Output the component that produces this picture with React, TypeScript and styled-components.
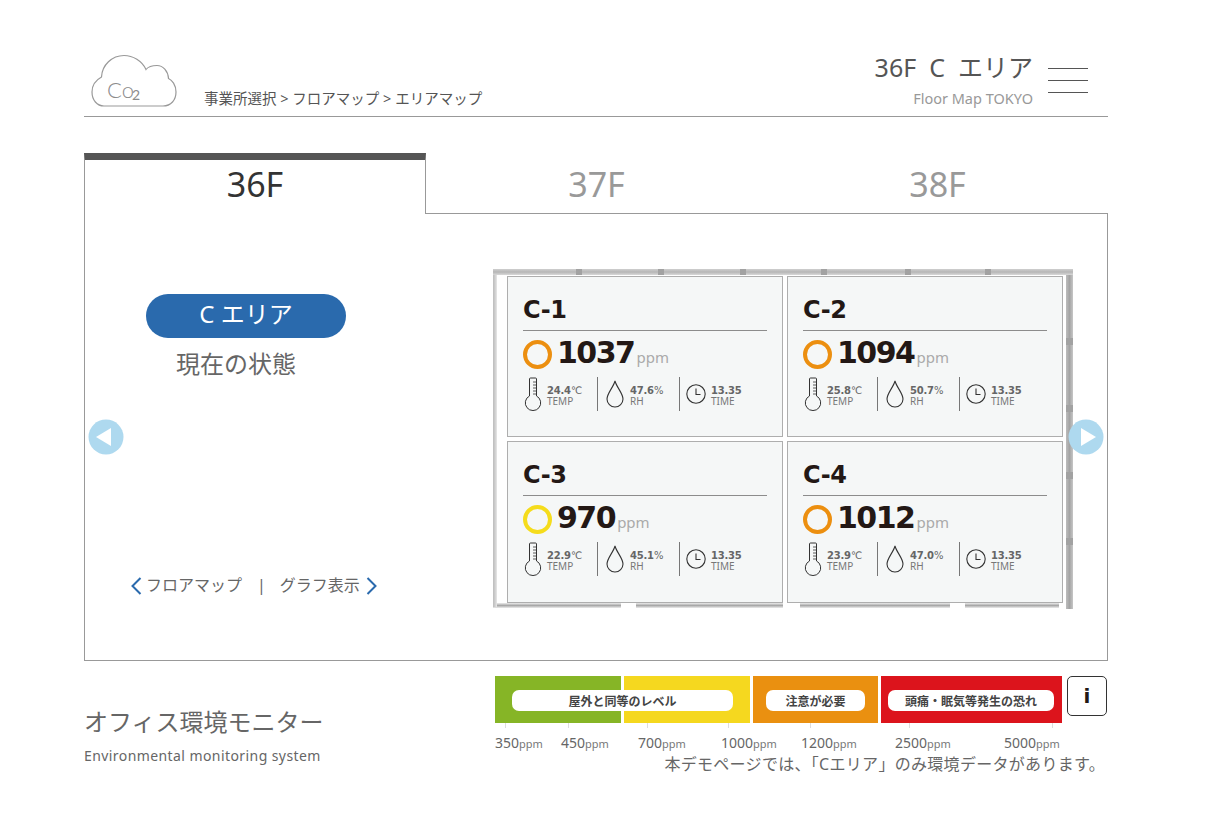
import React from 'react';
import styled, { createGlobalStyle } from 'styled-components';

const GlobalStyle = createGlobalStyle`
  html, body {
    margin: 0;
    padding: 0;
    background: #fff;
    font-family: "Noto Sans", "Noto Sans CJK JP", sans-serif;
    color: #666;
  }
`;

const Page = styled.div`
  width: 1024px;
  margin-left: 84px;
  padding-top: 50px;
`;

const Header = styled.header`
  display: flex;
  justify-content: space-between;
  height: 66px;
  border-bottom: 1px solid #999;
`;

const Brand = styled.div`
  display: flex;
  align-items: flex-start;
`;

const Logo = styled.svg`
  width: 88px;
  height: 54px;
  margin: 4px 0 0 6px;
`;

const Breadcrumb = styled.div`
  margin: 38px 0 0 26px;
  font-size: 14.5px;
  line-height: 20px;
  color: #555;
`;

const HeaderRight = styled.div`
  display: flex;
  gap: 15px;
  margin-right: 20px;
`;

const PlaceBlock = styled.div`
  text-align: right;
`;

const PlaceTitle = styled.div`
  font-size: 25px;
  line-height: 34px;
  color: #555;
  white-space: pre;
`;

const PlaceSub = styled.div`
  margin-top: 5px;
  font-size: 14.5px;
  line-height: 18px;
  color: #999;
`;

const Burger = styled.div`
  display: flex;
  flex-direction: column;
  gap: 11px;
  width: 40px;
  padding-top: 18px;

  span {
    height: 1px;
    background: #555;
  }
`;

const Tabs = styled.div`
  display: flex;
  margin-top: 36px;
  height: 61px;
`;

const Tab = styled.div<{ $active?: boolean }>`
  flex: ${p => (p.$active ? '0 0 342px' : '1')};
  display: flex;
  align-items: center;
  justify-content: center;
  box-sizing: border-box;
  padding-bottom: 6px;
  font-size: 34px;
  color: ${p => (p.$active ? '#333' : '#999')};
  border-top: ${p => (p.$active ? '7px solid #555' : '7px solid transparent')};
  border-left: ${p => (p.$active ? '1px solid #999' : 'none')};
  border-right: ${p => (p.$active ? '1px solid #999' : 'none')};
  border-bottom: ${p => (p.$active ? 'none' : '1px solid #999')};
`;

const Panel = styled.section`
  position: relative;
  display: flex;
  box-sizing: border-box;
  height: 447px;
  border: 1px solid #999;
  border-top: none;
`;

const LeftColumn = styled.div`
  display: flex;
  flex-direction: column;
  width: 408px;
  padding-top: 80px;
`;

const AreaPill = styled.div`
  display: flex;
  align-items: center;
  justify-content: center;
  box-sizing: border-box;
  width: 200px;
  height: 44px;
  margin-left: 61px;
  padding-bottom: 8px;
  border-radius: 22px;
  background: #2a6aad;
  color: #fff;
  font-size: 24px;
`;

const Status = styled.div`
  margin: 10px 0 0 91px;
  font-size: 24px;
  line-height: 32px;
  color: #666;
`;

const LinkRow = styled.div`
  display: flex;
  align-items: center;
  margin: 193px 0 0 45px;
  font-size: 16px;
  line-height: 24px;
  color: #666;
`;

const Separator = styled.span`
  margin: 0 14px 0 15px;
`;

const Chevron = styled.svg<{ $flip?: boolean }>`
  width: 12px;
  height: 20px;
  margin: ${p => (p.$flip ? '2px 0 0 6px' : '2px 4px 0 0')};
  transform: ${p => (p.$flip ? 'scaleX(-1)' : 'none')};
`;

const ArrowButton = styled.svg<{ $side: 'left' | 'right' }>`
  position: absolute;
  top: 205px;
  ${p => (p.$side === 'left' ? 'left: 3px;' : 'right: 3px;')}
  width: 36px;
  height: 36px;
`;

const FloorMap = styled.div`
  position: relative;
  box-sizing: border-box;
  display: grid;
  grid-template-columns: 276px 276px;
  grid-template-rows: 161px 162px;
  gap: 4px;
  width: 580px;
  height: 340px;
  margin-top: 55px;
  padding: 7px 0 0 14px;
  background:
    linear-gradient(to bottom, #cfcfcf, #b6b6b6, #d8d8d8) 0 0 / 100% 6px no-repeat,
    linear-gradient(to right, #bdbdbd, #cdcdcd, #e8e8e8) 0 0 / 4px 338px no-repeat,
    linear-gradient(to right, #bcbcbc, #a4a4a4, #c6c6c6) 573px 0 / 7px 340px no-repeat,
    linear-gradient(to bottom, #ececec, #a8a8a8, #ececec) 0 334px / 128px 5px no-repeat,
    linear-gradient(to bottom, #ececec, #a8a8a8, #ececec) 143px 334px / 147px 5px no-repeat,
    linear-gradient(to bottom, #ececec, #a8a8a8, #ececec) 307px 334px / 150px 5px no-repeat,
    linear-gradient(to bottom, #ececec, #a8a8a8, #ececec) 472px 334px / 94px 5px no-repeat,
    #fff;
`;

const Tick = styled.i<{ $left: number; $top: number; $upright?: boolean }>`
  position: absolute;
  left: ${p => p.$left}px;
  top: ${p => p.$top}px;
  width: ${p => (p.$upright ? '7px' : '6px')};
  height: ${p => (p.$upright ? '7px' : '6px')};
  background: #a2a2a2;
  filter: blur(0.6px);
`;

const Card = styled.article`
  position: relative;
  box-sizing: border-box;
  padding: 0 15px;
  background: #f5f7f7;
  border: 1px solid #aeaeae;
`;

const CardTitle = styled.h3`
  margin: 0;
  height: 54px;
  box-sizing: border-box;
  padding-top: 15px;
  font-family: "DejaVu Sans", sans-serif;
  font-size: 24px;
  line-height: 36px;
  font-weight: 700;
  letter-spacing: -0.5px;
  color: #231815;
  border-bottom: 1px solid #8c8c8c;
`;

const Reading = styled.div`
  display: flex;
  align-items: center;
  height: 46px;
`;

const Ring = styled.span<{ $color: string }>`
  box-sizing: border-box;
  width: 29px;
  height: 29px;
  border-radius: 50%;
  border: 4px solid ${p => p.$color};
`;

const Value = styled.span`
  margin: -2px 0 0 5px;
  font-family: "DejaVu Sans", sans-serif;
  font-size: 30px;
  line-height: 40px;
  font-weight: 700;
  letter-spacing: -1.5px;
  color: #231815;
`;

const Unit = styled.span`
  margin: 6px 0 0 2px;
  font-size: 15px;
  color: #aaa;
`;

const Stats = styled.div`
  display: flex;
  align-items: center;
  height: 34px;
`;

const Stat = styled.div<{ $w: number; $rule?: boolean }>`
  display: flex;
  align-items: center;
  box-sizing: border-box;
  width: ${p => p.$w}px;
  height: 34px;
  border-right: ${p => (p.$rule ? '1px solid #777' : 'none')};
`;

const StatIcon = styled.svg<{ $w: number; $h: number; $ml: number; $mr: number }>`
  flex: none;
  width: ${p => p.$w}px;
  height: ${p => p.$h}px;
  margin-left: ${p => p.$ml}px;
  margin-right: ${p => p.$mr}px;
`;

const StatText = styled.div`
  padding-top: 4px;
  font-size: 10px;
  line-height: 10px;
  color: #777;
  white-space: nowrap;

  b {
    display: block;
    font-family: "DejaVu Sans", sans-serif;
    font-weight: 700;
    font-size: 10px;
    letter-spacing: -0.2px;
    color: #666;
  }

  b small {
    font-size: 10px;
    font-weight: 400;
  }
`;

const Footer = styled.footer`
  display: flex;
  margin-top: 15px;
`;

const SystemName = styled.div`
  width: 411px;
  padding-top: 29px;
`;

const SystemTitle = styled.div`
  font-size: 24px;
  line-height: 34px;
  color: #666;
`;

const SystemSub = styled.div`
  margin-top: 7px;
  font-size: 14px;
  line-height: 20px;
  color: #666;
  letter-spacing: 0.42px;
`;

const LegendColumn = styled.div`
  width: 613px;
`;

const LegendRow = styled.div`
  display: flex;
  align-items: flex-start;
`;

const LegendBar = styled.div`
  display: flex;
  gap: 3px;
  width: 567px;
  height: 47px;
`;

const LegendBand = styled.div<{ $w: number; $bg: string }>`
  position: relative;
  flex: none;
  width: ${p => p.$w}px;
  height: 47px;
  background: ${p => p.$bg};
`;

const LegendLabel = styled.div<{ $left: number; $w: number }>`
  position: absolute;
  z-index: 1;
  top: 14px;
  left: ${p => p.$left}px;
  display: flex;
  align-items: center;
  justify-content: center;
  width: ${p => p.$w}px;
  height: 21px;
  border-radius: 7px;
  background: #fff;
  color: #444;
  font-size: 12px;
  font-weight: 700;
  white-space: nowrap;
`;

const InfoButton = styled.div`
  display: flex;
  align-items: center;
  justify-content: center;
  box-sizing: border-box;
  width: 40px;
  height: 40px;
  margin-left: 5px;
  border: 1px solid #333;
  border-radius: 5px;
  color: #231815;
  font-family: "DejaVu Sans", sans-serif;
  font-size: 20px;
  font-weight: 700;
`;

const Scale = styled.div`
  display: flex;
  height: 30px;
`;

const ScaleItem = styled.div<{ $w: number; $tick: number }>`
  position: relative;
  flex: none;
  width: ${p => p.$w}px;
  padding-top: 10px;
  font-size: 14px;
  line-height: 20px;
  color: #666;
  white-space: nowrap;

  small {
    font-size: 11px;
    color: #777;
  }

  &::before {
    content: '';
    position: absolute;
    top: 0;
    left: ${p => p.$tick}px;
    width: 1px;
    height: 5px;
    background: #ddd;
  }
`;

const Note = styled.div`
  margin-right: 3px;
  text-align: right;
  font-size: 16px;
  line-height: 22px;
  letter-spacing: 0.3px;
  color: #666;
  white-space: nowrap;
`;

const cards = [
  { name: 'C-1', ppm: '1037', color: '#ec8f10', temp: '24.4', rh: '47.6' },
  { name: 'C-2', ppm: '1094', color: '#ec8f10', temp: '25.8', rh: '50.7' },
  { name: 'C-3', ppm: '970', color: '#f5dc1c', temp: '22.9', rh: '45.1' },
  { name: 'C-4', ppm: '1012', color: '#ec8f10', temp: '23.9', rh: '47.0' },
];

const scale = [
  { v: '350', w: 66, tick: 10 },
  { v: '450', w: 77, tick: 7 },
  { v: '700', w: 83, tick: 9 },
  { v: '1000', w: 80, tick: 7 },
  { v: '1200', w: 94, tick: 9 },
  { v: '2500', w: 109, tick: 14 },
  { v: '5000', w: 60, tick: 48 },
];

const topTicks = [83, 165, 247, 328, 412, 492];
const sideTicks = [69, 136, 203, 269];

const Thermometer = () => (
  <StatIcon $w={18} $h={34} $ml={1} $mr={5} viewBox="0 0 18 34" fill="none" stroke="#333" strokeWidth="1">
    <path d="M5.5 19V2a1 1 0 0 1 1-1h5a1 1 0 0 1 1 1v17a7.7 7.7 0 1 1-7 0Z" />
    <path d="M9 5h3.5M9 8h3.5M9 11h3.5M9 14h3.5M9 17h3.5" strokeWidth="0.8" />
  </StatIcon>
);

const Drop = () => (
  <StatIcon $w={18} $h={28} $ml={8} $mr={6} viewBox="0 0 18 28" fill="none" stroke="#333" strokeWidth="1.1">
    <path d="M9 1C7.5 7 1 13.5 1 19a8 8 0 0 0 16 0C17 13.5 10.5 7 9 1Z" />
  </StatIcon>
);

const Clock = () => (
  <StatIcon $w={20} $h={20} $ml={6} $mr={5} viewBox="0 0 20 20" fill="none" stroke="#333" strokeWidth="1.1">
    <circle cx="10" cy="10" r="9.2" />
    <path d="M10 4.6V10.5H14.5" />
  </StatIcon>
);

const App: React.FC = () => {
  return (
    <>
      <GlobalStyle />
      <Page>
        <Header>
          <Brand>
            <Logo viewBox="90 54 88 54" fill="none">
              <path
                d="M104 106H163C171 106 176 100 176 92C176 85 172 80 168.5 78.5C168 71 163 65.5 157 65.5C152 65.5 148 67 146 69.5C142 61 133 55.5 124 55.5C112 55.5 102 65 101.5 77C96 80 92 85 92 92C92 100 97 106 104 106Z"
                stroke="#999"
                strokeWidth="1.2"
              />
              <text x="107" y="98" fontSize="22" fill="#8c8c8c" fontFamily="Lato, sans-serif" fontWeight="300">Co</text>
              <text x="132" y="100" fontSize="14" fill="#8c8c8c" fontFamily="Lato, sans-serif">2</text>
            </Logo>
            <Breadcrumb>事業所選択 &gt; フロアマップ &gt; エリアマップ</Breadcrumb>
          </Brand>
          <HeaderRight>
            <PlaceBlock>
              <PlaceTitle>36F  C  エリア</PlaceTitle>
              <PlaceSub>Floor Map TOKYO</PlaceSub>
            </PlaceBlock>
            <Burger>
              <span />
              <span />
              <span />
            </Burger>
          </HeaderRight>
        </Header>

        <Tabs>
          <Tab $active>36F</Tab>
          <Tab>37F</Tab>
          <Tab>38F</Tab>
        </Tabs>

        <Panel>
          <LeftColumn>
            <AreaPill>C エリア</AreaPill>
            <Status>現在の状態</Status>
            <LinkRow>
              <Chevron viewBox="0 0 12 20" fill="none" stroke="#2a6aad" strokeWidth="2">
                <path d="M10.5 2L2.5 10L10.5 18" />
              </Chevron>
              フロアマップ
              <Separator>|</Separator>
              グラフ表示
              <Chevron $flip viewBox="0 0 12 20" fill="none" stroke="#2a6aad" strokeWidth="2">
                <path d="M10.5 2L2.5 10L10.5 18" />
              </Chevron>
            </LinkRow>
          </LeftColumn>

          <FloorMap>
            {topTicks.map(x => (
              <Tick key={x} $left={x} $top={0} />
            ))}
            {sideTicks.map(y => (
              <Tick key={y} $left={573} $top={y} $upright />
            ))}
            {cards.map(c => (
              <Card key={c.name}>
                <CardTitle>{c.name}</CardTitle>
                <Reading>
                  <Ring $color={c.color} />
                  <Value>{c.ppm}</Value>
                  <Unit>ppm</Unit>
                </Reading>
                <Stats>
                  <Stat $w={75} $rule>
                    <Thermometer />
                    <StatText>
                      <b>{c.temp}<small>℃</small></b>
                      TEMP
                    </StatText>
                  </Stat>
                  <Stat $w={82} $rule>
                    <Drop />
                    <StatText>
                      <b>{c.rh}<small>%</small></b>
                      RH
                    </StatText>
                  </Stat>
                  <Stat $w={80}>
                    <Clock />
                    <StatText>
                      <b>13.35</b>
                      TIME
                    </StatText>
                  </Stat>
                </Stats>
              </Card>
            ))}
          </FloorMap>

          <ArrowButton $side="left" viewBox="0 0 36 36">
            <circle cx="18" cy="18" r="17.5" fill="#aed9ef" />
            <path d="M8 18L23 9V27Z" fill="#fff" />
          </ArrowButton>
          <ArrowButton $side="right" viewBox="0 0 36 36">
            <circle cx="18" cy="18" r="17.5" fill="#aed9ef" />
            <path d="M28 18L13 9V27Z" fill="#fff" />
          </ArrowButton>
        </Panel>

        <Footer>
          <SystemName>
            <SystemTitle>オフィス環境モニター</SystemTitle>
            <SystemSub>Environmental monitoring system</SystemSub>
          </SystemName>
          <LegendColumn>
            <LegendRow>
              <LegendBar>
                <LegendBand $w={126} $bg="#86b526">
                  <LegendLabel $left={17} $w={221}>屋外と同等のレベル</LegendLabel>
                </LegendBand>
                <LegendBand $w={126} $bg="#f5d81f" />
                <LegendBand $w={125} $bg="#ea9010">
                  <LegendLabel $left={13} $w={99}>注意が必要</LegendLabel>
                </LegendBand>
                <LegendBand $w={181} $bg="#dc141c">
                  <LegendLabel $left={7} $w={166}>頭痛・眠気等発生の恐れ</LegendLabel>
                </LegendBand>
              </LegendBar>
              <InfoButton>i</InfoButton>
            </LegendRow>
            <Scale>
              {scale.map(s => (
                <ScaleItem key={s.v} $w={s.w} $tick={s.tick}>
                  {s.v}<small>ppm</small>
                </ScaleItem>
              ))}
            </Scale>
            <Note>本デモページでは、「Cエリア」のみ環境データがあります。</Note>
          </LegendColumn>
        </Footer>
      </Page>
    </>
  );
};

export default App;
